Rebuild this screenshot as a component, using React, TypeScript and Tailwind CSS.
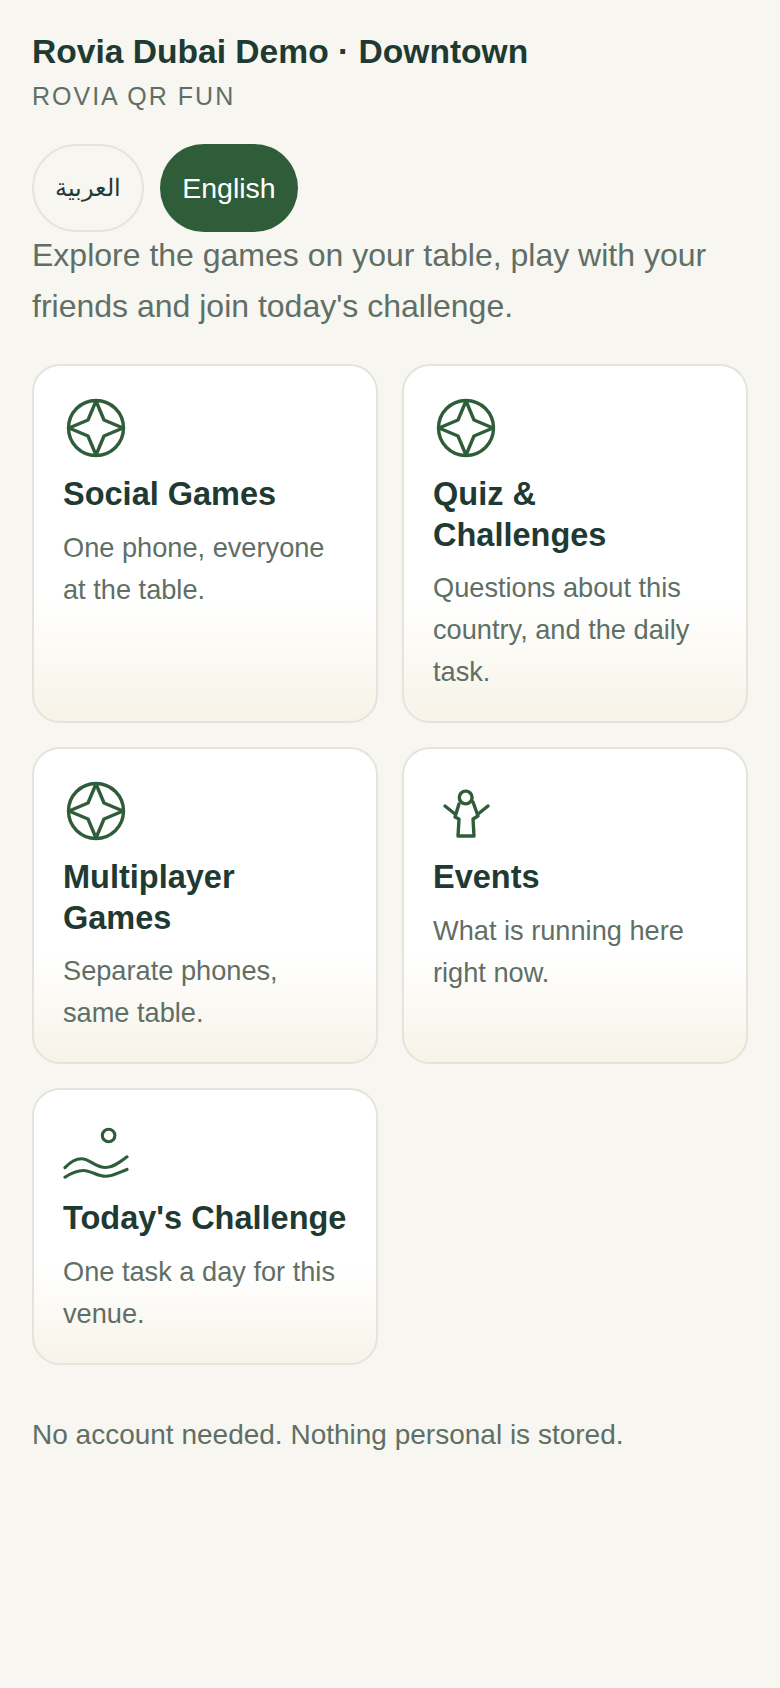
const SANS = "font-['Liberation_Sans',Arial,sans-serif]";

function StarIcon() {
  return (
    <svg width="60" height="60" viewBox="0 0 60 60" fill="none" stroke="#2f5d3a" strokeWidth="3.4" strokeLinejoin="round">
      <circle cx="30" cy="30" r="27.5" />
      <path d="M30 3 L38 22 L57 30 L38 38 L30 57 L22 38 L3 30 L22 22 Z" />
    </svg>
  );
}

function FigureIcon() {
  return (
    <svg width="60" height="60" viewBox="0 0 60 60" fill="none" stroke="#2f5d3a" strokeWidth="3.4" strokeLinecap="round" strokeLinejoin="round">
      <circle cx="29.7" cy="16.5" r="6.4" />
      <path d="M23 23 L19 36 L23 38 L22 55 L38 55 L37 38 L42 35 L37 21" />
      <path d="M9 25 L19 33 M52 25 L42 33" />
    </svg>
  );
}

function WaveIcon() {
  return (
    <svg width="68" height="60" viewBox="-1 0 68 60" fill="none" stroke="#2f5d3a" strokeWidth="3.2" strokeLinecap="round">
      <circle cx="46" cy="13" r="6.5" />
      <path d="M1 46 C7 40 12 37 18 37 C27 37 32 46 43 46 C51 46 58 40 65 35" />
      <path d="M1 56 C7 52 12 49 20 49 C28 49 34 55 43 55 C50 55 57 51 65 48" />
    </svg>
  );
}

function Card({ icon, title, body }: { icon: React.ReactNode; title: React.ReactNode; body: React.ReactNode }) {
  return (
    <div className="flex flex-col rounded-[28px] border-2 border-[#e4e4dc] bg-linear-to-b from-white from-65% to-[#f7f3e8] px-[29px] pt-[32px] pb-[28px]">
      <div className="h-[60px] w-[66px] flex items-center justify-center">{icon}</div>
      <h2 className="mt-[16px] text-[32.5px] leading-[40.6px] font-bold text-[#1f3a32]">{title}</h2>
      <p className="mt-[12px] text-[27.2px] leading-[42px] text-[#5f6f66]">{body}</p>
    </div>
  );
}

export default function App() {
  return (
    <div className={`${SANS} min-h-[1688px] bg-[#f7f6f1] px-[32px] pt-[32px]`}>
      <h1 className="text-[33.6px] leading-[40px] font-bold text-[#1f3a32]">Rovia Dubai Demo · Downtown</h1>
      <p className="mt-[8px] text-[25px] leading-[32px] tracking-[2px] text-[#5f6f66]">ROVIA QR FUN</p>

      <div className="mt-[32px] flex gap-[16px]">
        <button className="h-[88px] w-[112px] rounded-full border-2 border-[#e4e4dc] text-[24px] text-[#1f3a32]">العربية</button>
        <button className="h-[88px] w-[138px] rounded-full bg-[#2f5d3a] text-[28.5px] text-white">English</button>
      </div>

      <p className="-mt-[2px] text-[32px] leading-[51px] text-[#5f6f66]">
        Explore the games on your table, play with your friends and join today's challenge.
      </p>

      <div className="mt-[32px] grid grid-cols-2 gap-[24px]">
        <Card icon={<StarIcon />} title="Social Games" body="One phone, everyone at the table." />
        <Card icon={<StarIcon />} title="Quiz & Challenges" body="Questions about this country, and the daily task." />
        <Card icon={<StarIcon />} title="Multiplayer Games" body="Separate phones, same table." />
        <Card icon={<FigureIcon />} title="Events" body="What is running here right now." />
        <Card icon={<WaveIcon />} title="Today's Challenge" body="One task a day for this venue." />
      </div>

      <p className="mt-[50px] text-[28px] leading-[40px] text-[#5f6f66]">No account needed. Nothing personal is stored.</p>
    </div>
  );
}
